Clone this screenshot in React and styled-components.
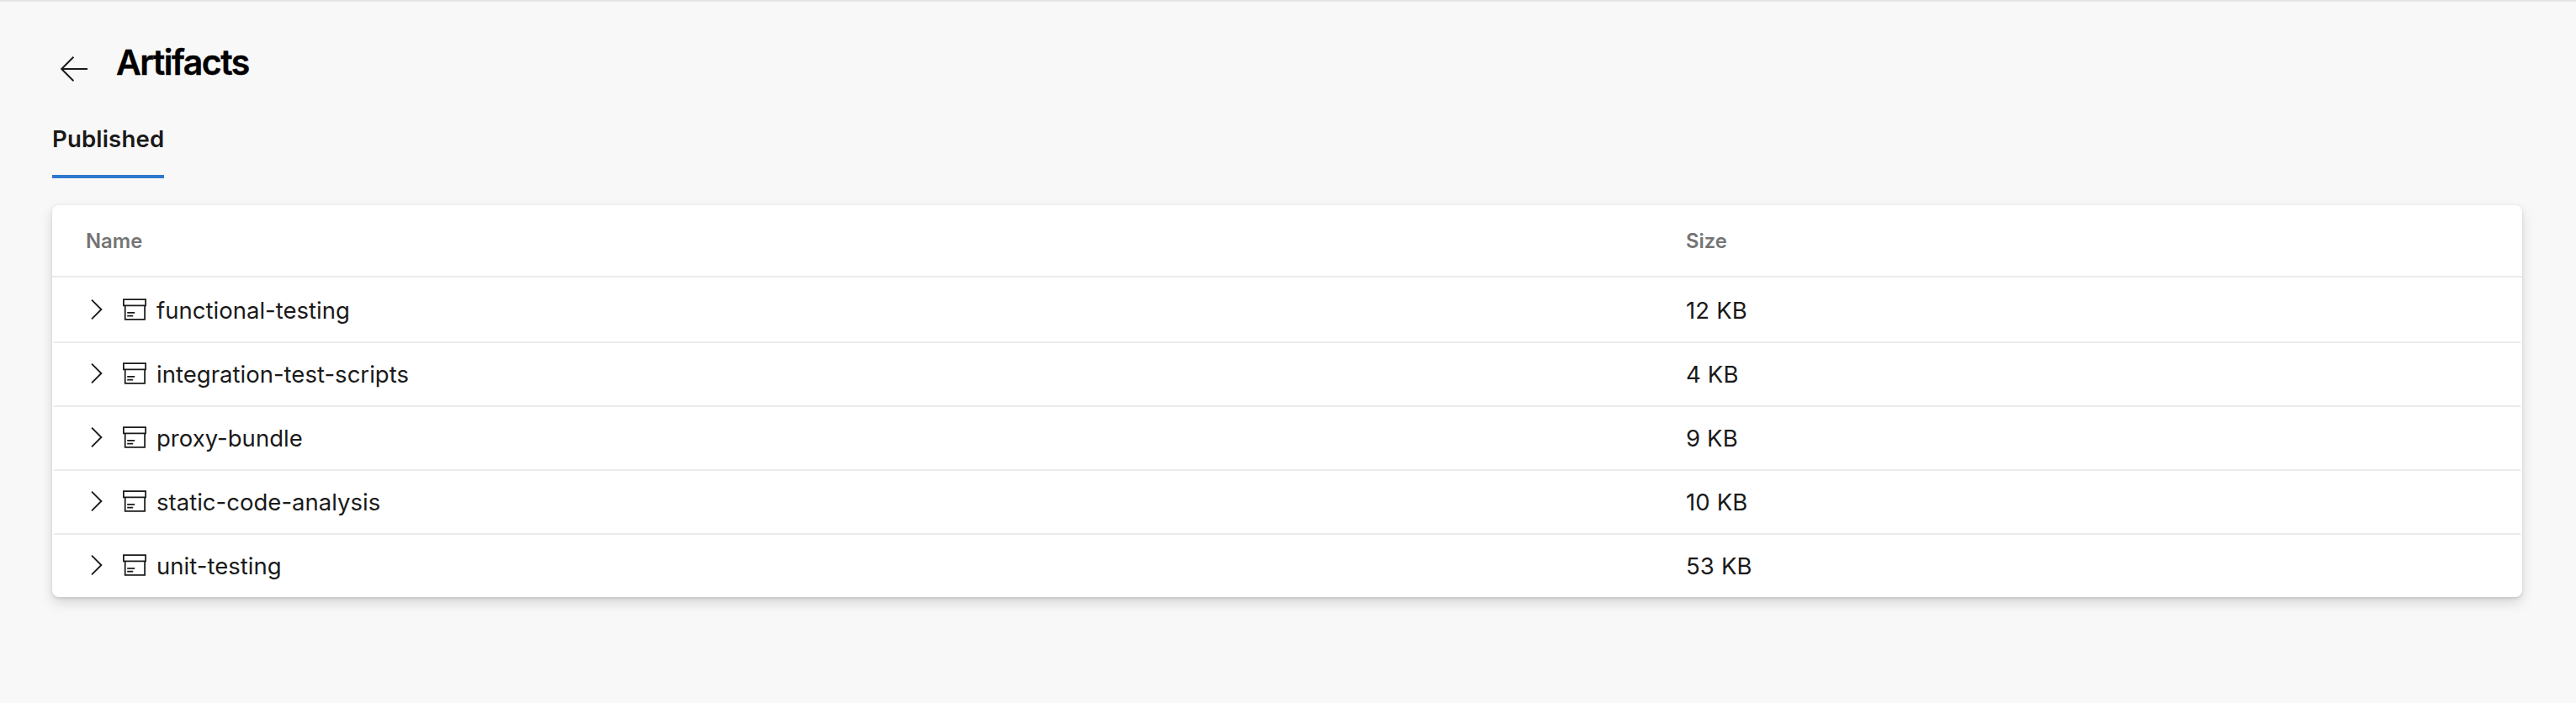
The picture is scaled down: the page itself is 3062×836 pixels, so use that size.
import React from "react";
import styled, { createGlobalStyle } from "styled-components";

const GlobalStyle = createGlobalStyle`
  *, *::before, *::after { box-sizing: border-box; }
  body {
    margin: 0;
    background: #f8f8f8;
    color: #1a1a1a;
    font-family: Inter, "Liberation Sans", sans-serif;
  }
`;

const Page = styled.main`
  min-height: 836px;
  padding: 0 64px 0 62px;
  border-top: 2px solid #e6e6e6;
  background: #f8f8f8;
`;

const Header = styled.header`
  display: flex;
  align-items: center;
  height: 112px;
  padding-top: 32px;
`;

const BackButton = styled.button`
  display: flex;
  width: 52px;
  height: 48px;
  margin-top: 16px;
  padding: 8px 10px;
  border: 0;
  background: none;
  color: #1a1a1a;
`;

const Title = styled.h1`
  margin: 0 0 0 24px;
  color: #000;
  font-size: 41px;
  font-weight: 600;
  line-height: 48px;
  letter-spacing: -1.5px;
  -webkit-text-stroke: 0.4px #000;
`;

const Tabs = styled.nav`
  display: flex;
  height: 98px;
`;

const Tab = styled.a`
  display: flex;
  align-items: center;
  width: 133px;
  padding-top: 8px;
  border-bottom: 4px solid #2f78cf;
  font-size: 27.6px;
  font-weight: 600;
  letter-spacing: 0.15px;
  white-space: nowrap;
`;

const Card = styled.section`
  margin-top: 32px;
  border-radius: 8px;
  background: #fff;
  box-shadow: 0 6.4px 14.4px rgba(0, 0, 0, 0.132), 0 1.2px 3.6px rgba(0, 0, 0, 0.108);
`;

const HeadRow = styled.div`
  display: grid;
  grid-template-columns: 1902px 1fr;
  align-items: center;
  height: 86px;
  padding-left: 40px;
  border-bottom: 2px solid #eaeaea;
  color: #757575;
  font-size: 23.8px;
  font-weight: 600;
`;

const Body = styled.div`
  padding-top: 2px;
`;

const Row = styled.div`
  display: grid;
  grid-template-columns: 1902px 1fr;
  align-items: center;
  height: 76px;
  padding-left: 36px;
  border: 0 solid transparent;
  border-width: 0 4px 2px;
  border-bottom-color: #eaeaea;
  font-size: 27.5px;

  &:last-child {
    height: 74px;
    border-bottom-width: 0;
  }
`;

const NameCell = styled.div`
  display: flex;
  align-items: center;
  letter-spacing: 0.02px;
`;

const SizeCell = styled.div`
  letter-spacing: 0.15px;
`;

const Icon = styled.svg`
  flex: none;
  display: block;
  width: ${(p) => p.$size}px;
  height: ${(p) => p.$size}px;
  margin: ${(p) => p.$margin || 0};
  fill: none;
  stroke: currentColor;
  stroke-width: ${(p) => p.$stroke};
`;

const BackIcon = () => (
  <Icon $size={32} $stroke={2} viewBox="0 0 32 32">
    <path d="M32 16H1.5M15.4 1.8 1.2 16l14.2 14.2" />
  </Icon>
);

const ChevronIcon = () => (
  <Icon $size={28} $stroke={1.9} $margin="-2px 16px 0 0" viewBox="0 0 28 28">
    <path d="M7 2.6 18.4 14 7 25.4" />
  </Icon>
);

const ArtifactIcon = () => (
  <Icon $size={28} $stroke={1.75} $margin="-2px 12px 0 0" viewBox="0 0 28 28">
    <path d="M.9 2.1h26.2v7.2H.9zM2.7 9.3v16.6h23.4V9.3M5.2 17.9h9M5.2 21.6h7" />
  </Icon>
);

const artifacts = [
  { name: "functional-testing", size: "12 KB" },
  { name: "integration-test-scripts", size: "4 KB" },
  { name: "proxy-bundle", size: "9 KB" },
  { name: "static-code-analysis", size: "10 KB" },
  { name: "unit-testing", size: "53 KB" },
];

export default function App() {
  return (
    <Page>
      <GlobalStyle />
      <Header>
        <BackButton aria-label="Back">
          <BackIcon />
        </BackButton>
        <Title>Artifacts</Title>
      </Header>
      <Tabs>
        <Tab>Published</Tab>
      </Tabs>
      <Card>
        <HeadRow>
          <div>Name</div>
          <div>Size</div>
        </HeadRow>
        <Body>
          {artifacts.map(({ name, size }) => (
            <Row key={name}>
              <NameCell>
                <ChevronIcon />
                <ArtifactIcon />
                <span>{name}</span>
              </NameCell>
              <SizeCell>{size}</SizeCell>
            </Row>
          ))}
        </Body>
      </Card>
    </Page>
  );
}
